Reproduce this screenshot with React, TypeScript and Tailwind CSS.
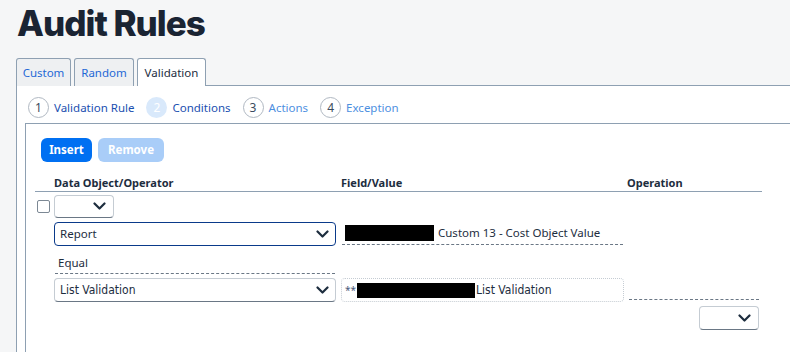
import React from "react";

const Chevron = ({ className = "" }: { className?: string }) => (
  <svg width="13" height="9" viewBox="0 0 13 9" className={className}>
    <path d="M1.5 1.5 L6.5 6.5 L11.5 1.5" fill="none" stroke="#1d2d3e" strokeWidth="2.2" strokeLinecap="round" strokeLinejoin="round" />
  </svg>
);

const Step = ({ n, label, state }: { n: string; label: string; state: "done" | "active" | "todo" }) => (
  <div className="flex items-center gap-[5px]">
    <div
      className={
        state === "active"
          ? "w-[21px] h-[21px] rounded-full bg-[#d9e9fb] text-white flex items-center justify-center text-[12px]"
          : "w-[21px] h-[21px] rounded-full border border-[#b0b8c2] bg-white text-[#3a4a5c] flex items-center justify-center text-[12px]"
      }
    >
      {n}
    </div>
    <span className={state === "todo" ? "text-[11.5px] text-[#4d8fdf]" : "text-[11.5px] text-[#1b4fb0]"}>{label}</span>
  </div>
);

const narrow = { fontFamily: "'Liberation Sans Narrow', 'DejaVu Sans Condensed', sans-serif" };

export default function App() {
  return (
    <div className="w-[790px] h-[352px] overflow-hidden bg-[#f5f6f7] text-[#1d2d3e]" style={{ fontFamily: "'Noto Sans', 'Open Sans', sans-serif" }}>
      <h1 className="pl-[17px] pt-[1px] h-[58px] text-[35px] leading-[44px] font-extrabold tracking-[-1px] text-[#1a2433]" style={{ fontFamily: "Inter, sans-serif" }}>
        Audit Rules
      </h1>
      <div className="flex items-end pl-[16px] h-[28px]">
        <div className="flex gap-[3px] h-[28px]">
          <div className="w-[55px] h-[28px] border border-b-0 border-[#8ea0b2] bg-[#eef0f2] rounded-t-[3px] text-[11.5px] text-[#1f68d6] flex items-center justify-center">Custom</div>
          <div className="w-[60px] h-[28px] border border-b-0 border-[#8ea0b2] bg-[#eef0f2] rounded-t-[3px] text-[11.5px] text-[#1f68d6] flex items-center justify-center">Random</div>
          <div className="w-[69px] h-[28px] border border-b-0 border-[#8ea0b2] bg-white rounded-t-[3px] text-[11.5px] text-[#1d2d3e] flex items-center justify-center">Validation</div>
        </div>
        <div className="flex-1 border-b border-[#8ea0b2]" />
      </div>
      <div className="ml-[16px] bg-white border-l border-[#8ea0b2] h-[300px]">
        <div className="flex items-center gap-[12px] pl-[11px] pt-[6px] h-[37px]">
          <Step n="1" label="Validation Rule" state="done" />
          <Step n="2" label="Conditions" state="active" />
          <Step n="3" label="Actions" state="todo" />
          <Step n="4" label="Exception" state="todo" />
        </div>
        <div className="ml-[8px] border-l border-t border-[#8ea0b2] h-[260px] pl-[15px] pt-[14px]">
          <div className="flex gap-[6px]">
            <button className="w-[51px] h-[24px] rounded-[6px] bg-[#0070f2] text-white text-[11.5px] font-bold">Insert</button>
            <button className="w-[66px] h-[24px] rounded-[6px] bg-[#a9cdf8] text-white text-[11.5px] font-bold">Remove</button>
          </div>
          <div className="ml-[-6px] w-[727px] mt-[13px] text-[11.5px]">
            <div className="grid grid-cols-[19px_287px_286px_135px] h-[17px] border-b border-[#8ea0b2] font-bold items-start leading-[15px] text-[11px]">
              <div />
              <div>Data Object/Operator</div>
              <div>Field/Value</div>
              <div>Operation</div>
            </div>
            <div className="grid grid-cols-[19px_287px_286px_135px] mt-[3px] h-[23px]">
              <div className="flex items-center pl-[2px]">
                <div className="w-[13px] h-[13px] rounded-[2px] border border-[#7c8894]" />
              </div>
              <div>
                <div className="w-[60px] h-[23px] rounded-[4px] border border-[#c5ccd3] border-b-[#6a7785] flex items-center justify-end pr-[7px]">
                  <Chevron />
                </div>
              </div>
            </div>
            <div className="grid grid-cols-[19px_287px_286px_135px] mt-[4px] h-[24px]">
              <div />
              <div>
                <div className="w-[282px] h-[24px] rounded-[4px] border border-[#0a3a8a] flex items-center justify-between pl-[5px] pr-[6px]">
                  <span className="text-[11.5px]">Report</span>
                  <Chevron />
                </div>
              </div>
              <div className="pl-[1px]">
                <div className="w-[281px] h-[23px] border-b border-dashed border-[#6a7785] flex items-center pl-[3px]">
                  <div className="w-[89px] h-[16px] bg-black" />
                  <span className="ml-[4px] text-[11.5px]">Custom 13 - Cost Object Value</span>
                </div>
              </div>
            </div>
            <div className="grid grid-cols-[19px_287px_286px_135px] mt-[4px] h-[24px]">
              <div />
              <div className="pl-[1px]">
                <div className="w-[280px] h-[24px] border-b border-dashed border-[#6a7785] flex items-center pl-[3px] pt-[3px] text-[11.5px]">Equal</div>
              </div>
            </div>
            <div className="grid grid-cols-[19px_287px_286px_135px] mt-[4px] h-[24px]">
              <div />
              <div>
                <div className="w-[282px] h-[24px] rounded-[4px] border border-[#c5ccd3] border-b-[#6a7785] flex items-center justify-between pl-[5px] pr-[6px]">
                  <span className="text-[12px]" style={narrow}>List Validation</span>
                  <Chevron />
                </div>
              </div>
              <div>
                <div className="w-[283px] h-[24px] rounded-[4px] border border-dotted border-[#c5ccd3] flex items-center pl-[3px]">
                  <span className="text-[10px] text-[#4a5a7a]">**</span>
                  <div className="ml-[1px] w-[118px] h-[15px] bg-black" />
                  <span className="ml-[1px] text-[12px]" style={narrow}>List Validation</span>
                </div>
              </div>
              <div className="pl-[2px]">
                <div className="w-[130px] h-[22px] border-b border-dashed border-[#6a7785]" />
              </div>
            </div>
            <div className="grid grid-cols-[19px_287px_286px_135px] mt-[4px] h-[24px]">
              <div />
              <div />
              <div />
              <div className="flex justify-end pr-[3px]">
                <div className="w-[60px] h-[24px] rounded-[4px] border border-[#c5ccd3] border-b-[#6a7785] flex items-center justify-end pr-[7px]">
                  <Chevron />
                </div>
              </div>
            </div>
          </div>
        </div>
      </div>
    </div>
  );
}
